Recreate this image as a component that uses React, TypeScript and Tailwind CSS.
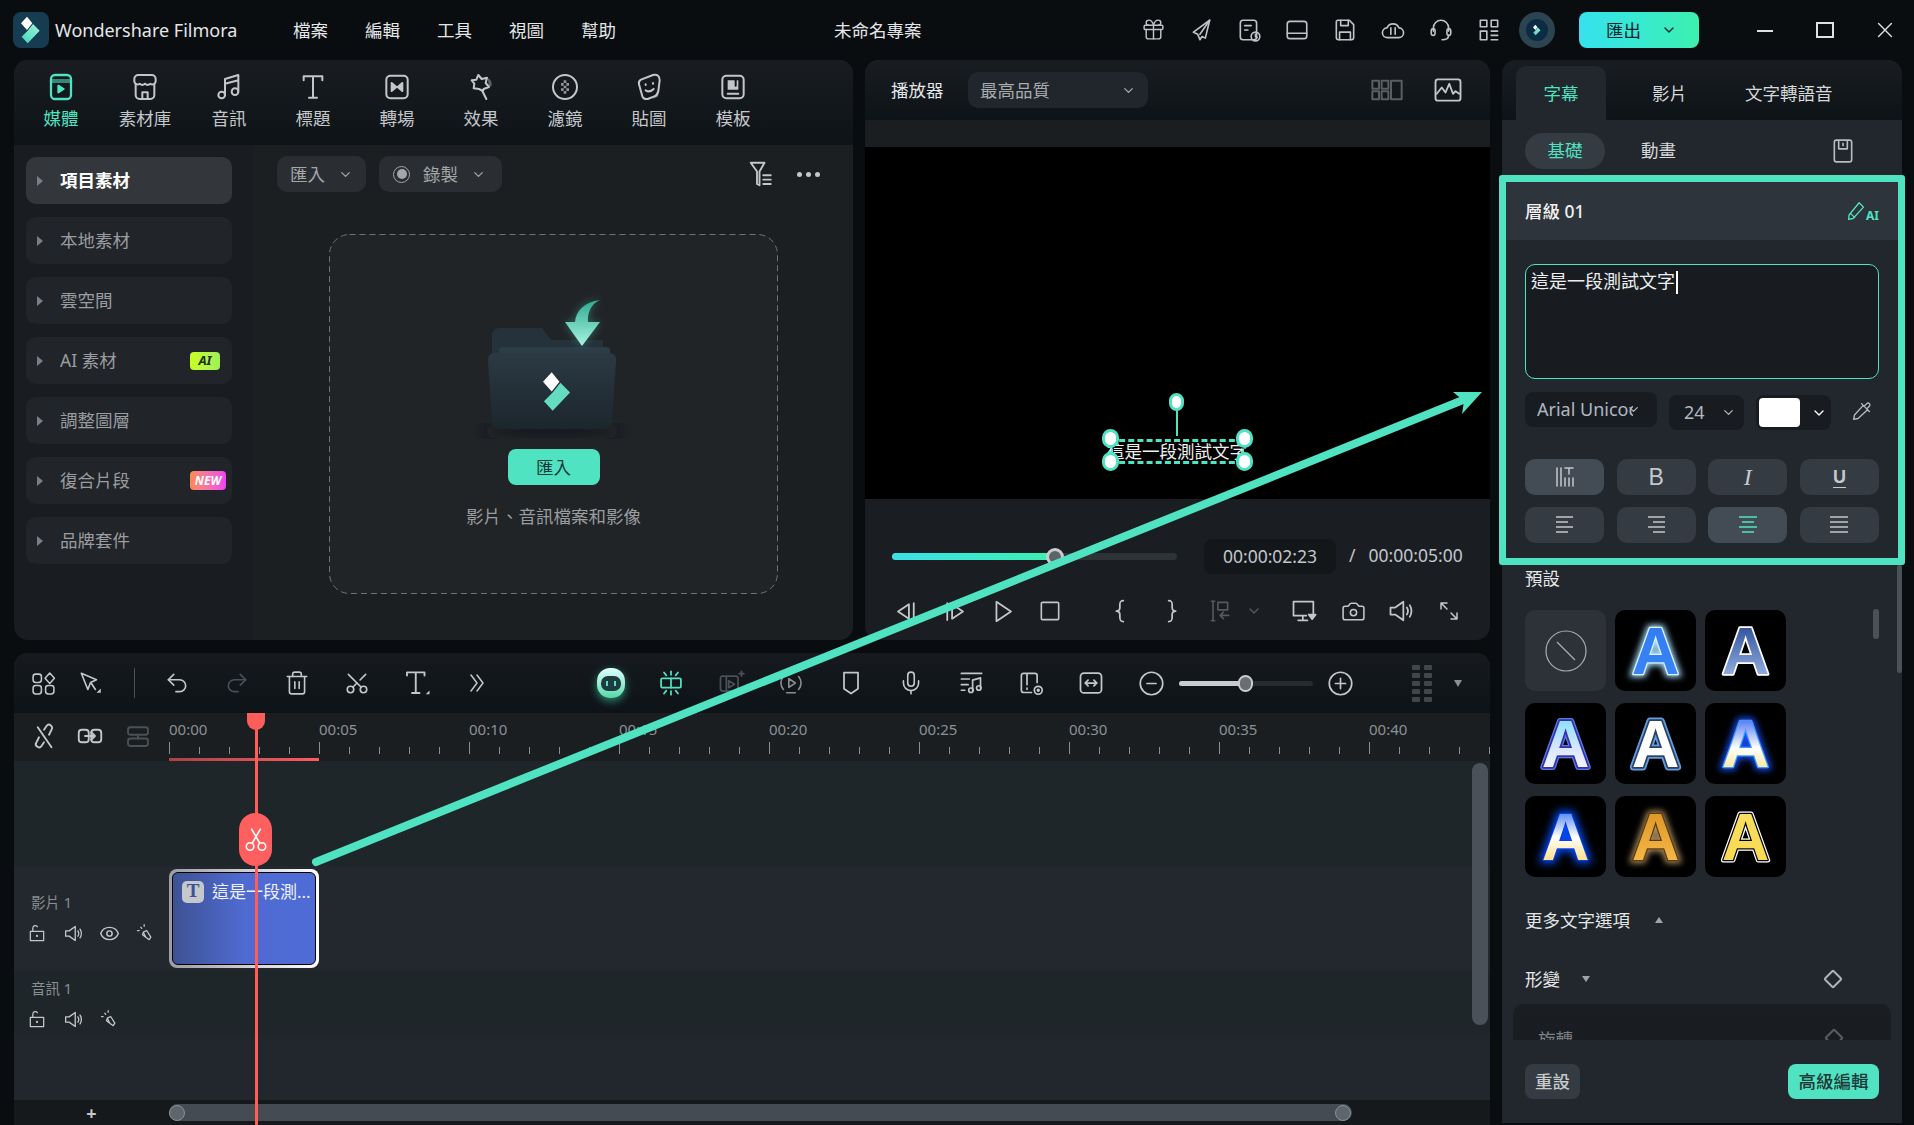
import { ReactNode } from "react";
import { Camera, ChevronDown, Eye, Gift, Mic, Redo2, Scissors, Trash2, Undo2 } from "lucide-react";

const ICON = { fill: "none", stroke: "currentColor", strokeWidth: 1.5, strokeLinecap: "round", strokeLinejoin: "round" } as const;

function Ico({ size = 26, children, className = "" }: { size?: number; children: ReactNode; className?: string }) {
  return (
    <svg width={size} height={size} viewBox="0 0 24 24" className={className} {...ICON}>
      {children}
    </svg>
  );
}

function Mark({ w, h }: { w: number; h: number }) {
  return (
    <svg width={w} height={h} viewBox="0 0 30 40">
      <defs>
        <linearGradient id={`mark${w}`} x1="0" y1="1" x2="1" y2="0">
          <stop offset="0" stopColor="#3fd6b2" />
          <stop offset="1" stopColor="#a5f2de" />
        </linearGradient>
      </defs>
      <polygon points="9,0 17,10 9,20 0,10" fill="#fff" />
      <polygon points="18,11 28,21 10,40 1,30 10,21" fill={`url(#mark${w})`} />
    </svg>
  );
}

function Tri({ className = "" }: { className?: string }) {
  return <span className={`inline-block h-0 w-0 border-y-[5px] border-l-[6px] border-y-transparent border-l-[#7a7f85] ${className}`} />;
}

function TopBar() {
  const right = [
    <Gift key="g" size={25} strokeWidth={1.4} />,
    <Ico key="s"><path d="M20 3 5 14l4 2 2 5 2-3 3 1.500z" /><path d="m20 3-9 13" /></Ico>,
    <Ico key="h"><rect x="4" y="3" width="15" height="18" rx="2.500" /><path d="M8 8h6M8 12h3" /><circle cx="18" cy="18" r="4" /><path d="M18 16v2l1.500 1" /></Ico>,
    <Ico key="l"><rect x="3" y="4" width="18" height="16" rx="2.500" /><path d="M3 15h18" /></Ico>,
    <Ico key="v"><path d="M5 3h11l4 4v12a2 2 0 0 1-2 2H6a2 2 0 0 1-2-2V4z" /><path d="M8 3v5h7V3M7 21v-7h10v7" /></Ico>,
    <Ico key="c"><path d="M7 19a4.500 4.500 0 0 1-.5-9 6 6 0 0 1 11 0 4.500 4.500 0 0 1-.5 9z" /><path d="M10 10v6M14 10v6" /></Ico>,
    <Ico key="p"><path d="M5 13V10a7 7 0 0 1 14 0v3" /><rect x="3" y="11" width="3.500" height="6" rx="1.500" /><rect x="17.500" y="11" width="3.500" height="6" rx="1.500" /><path d="M19 17c0 3-3 4-6 4" /></Ico>,
    <Ico key="a"><path d="M4 3h6v6H4zM14 3h6v6h-6zM4 13h6v8H4zM14 13h6M14 17h6M14 21h6" /></Ico>,
  ];
  return (
    <div className="flex h-[60px] items-center text-[#e4e6e8]">
      <div className="ml-[13px] flex h-[36px] w-[36px] items-center justify-center rounded-[8px] bg-[#163c52]">
        <Mark w={20} h={28} />
      </div>
      <span className="ml-[6px] w-[200px] text-[18px]">Wondershare Filmora</span>
      <div className="ml-[38px] flex gap-[36px] text-[17.500px]">
        {["檔案", "編輯", "工具", "視圖", "幫助"].map((m) => (
          <span key={m} className="w-[36px]">{m}</span>
        ))}
      </div>
      <span className="ml-[217px] w-[90px] text-[17.500px]">未命名專案</span>
      <div className="ml-[205px] flex text-[#bfc3c7]">
        {right.map((icon, i) => (
          <span key={i} className="flex w-[48px] justify-center">{icon}</span>
        ))}
      </div>
      <div className="ml-[6px] flex h-[36px] w-[36px] items-center justify-center rounded-full bg-[#2b4450]">
        <span className="flex h-[22px] w-[22px] items-center justify-center rounded-full bg-[#0b2c44]">
          <Mark w={8} h={12} />
        </span>
      </div>
      <div className="ml-[24px] flex h-[36px] w-[120px] items-center rounded-[8px] bg-gradient-to-r from-[#36e2ee] to-[#3df0ae] pl-[27px] text-[17.500px] text-[#13262b]">
        匯出
        <ChevronDown size={16} className="ml-[20px]" />
      </div>
      <div className="ml-[36px] flex items-center text-[#e0e0e0]">
        <span className="flex w-[60px] justify-center"><span className="mt-[1px] h-[2px] w-[16px] bg-[#e0e0e0]" /></span>
        <span className="flex w-[60px] justify-center"><span className="h-[16px] w-[18px] border-2 border-[#e0e0e0]" /></span>
        <Ico size={22} className="ml-[19px]"><path d="m5 5 14 14M19 5 5 19" /></Ico>
      </div>
    </div>
  );
}

function MediaTab({ label, active, children }: { label: string; active?: boolean; children: ReactNode }) {
  return (
    <div className={`flex w-[84px] flex-col items-center ${active ? "text-[#50e3c2]" : "text-[#c4c7ca]"}`}>
      <span className="flex h-[32px] items-center">{children}</span>
      <span className="mt-[3px] text-[17.500px] leading-[24px]">{label}</span>
    </div>
  );
}

function SideItem({ label, active, badge }: { label: string; active?: boolean; badge?: ReactNode }) {
  return (
    <div className={`relative flex h-[47px] items-center rounded-[10px] pl-[11px] ${active ? "bg-[#33373b] font-bold text-white" : "bg-[#212428] text-[#9a9da0]"}`}>
      <Tri />
      <span className="ml-[17px] text-[17.500px]">{label}</span>
      {badge}
    </div>
  );
}

function SelectBox({ children, className = "" }: { children: ReactNode; className?: string }) {
  return <div className={`flex h-[36px] items-center rounded-[10px] bg-[#2a2e32] text-[17.500px] text-[#a4a6a8] ${className}`}>{children}</div>;
}

function FolderArt() {
  return (
    <svg width="160" height="150" viewBox="0 0 160 150">
      <defs>
        <linearGradient id="folderBody" x1="0" y1="0" x2="0" y2="1">
          <stop offset="0" stopColor="#2b3a44" />
          <stop offset="1" stopColor="#1c262d" />
        </linearGradient>
        <linearGradient id="arrowFill" x1="0" y1="0" x2="0" y2="1">
          <stop offset="0" stopColor="#2fa98f" />
          <stop offset="1" stopColor="#a6f5e1" />
        </linearGradient>
        <filter id="soft"><feGaussianBlur stdDeviation="7" /></filter>
        <filter id="glowA" x="-40%" y="-40%" width="180%" height="180%"><feGaussianBlur stdDeviation="4" /></filter>
      </defs>
      <ellipse cx="78" cy="140" rx="72" ry="6" fill="#14191d" filter="url(#soft)" />
      <path d="M18 45q0-8 8-8h42l9 12h52v30H18z" fill="#25323b" />
      <rect x="25" y="56" width="111" height="14" rx="4" fill="#2d3d47" />
      <path d="M126 9C110 11 102 20 101 31H91l17 24 18-24h-12c-1-9 3-18 12-22z" fill="#50e3c2" opacity=".35" filter="url(#glowA)" />
      <path d="M126 9C110 11 102 20 101 31H91l17 24 18-24h-12c-1-9 3-18 12-22z" fill="url(#arrowFill)" />
      <path d="M14 69q0-7 7-7h114q7 0 7 7l-4 62q-1 7-8 7H26q-7 0-8-7z" fill="url(#folderBody)" />
      <svg x="69" y="81" width="29" height="39" viewBox="0 0 30 40" overflow="visible">
        <polygon points="9,0 17,10 9,20 0,10" fill="#fff" />
        <polygon points="18,11 28,21 10,40 1,30 10,21" fill="#64dcc0" />
      </svg>
    </svg>
  );
}

function MediaPanel() {
  return (
    <div className="flex w-[839px] flex-col overflow-hidden rounded-[14px] bg-[#191c20]">
      <div className="flex h-[85px] bg-gradient-to-b from-[#191d21] to-[#0e1318] pl-[5px] pt-[11px]">
        <MediaTab label="媒體" active>
          <Ico size={32}><rect x="4.500" y="3" width="15" height="18" rx="3" strokeWidth="1.700" /><path d="M5 7.500h14" strokeWidth="3" opacity=".55" /><path d="m10 11 4 2.500-4 2.500z" fill="currentColor" /></Ico>
        </MediaTab>
        <MediaTab label="素材庫">
          <Ico size={32}><path d="M7 3h10a3 3 0 0 1 3 3v2a2.500 2.500 0 0 1-4 1.500 3 3 0 0 1-4 0 3 3 0 0 1-4 0A2.500 2.500 0 0 1 4 8V6a3 3 0 0 1 3-3z" /><path d="M5 10v8a3 3 0 0 0 3 3h8a3 3 0 0 0 3-3v-8M10 21v-5h4v5" /></Ico>
        </MediaTab>
        <MediaTab label="音訊">
          <Ico size={32}><path d="M9 18V6l10-3v12M9 9.500 19 7" /><circle cx="6.500" cy="18" r="2.500" /><circle cx="16.500" cy="15.500" r="2.500" /></Ico>
        </MediaTab>
        <MediaTab label="標題">
          <Ico size={32}><path d="M5 7V4h14v3M12 4v16M9 20h6" /></Ico>
        </MediaTab>
        <MediaTab label="轉場">
          <Ico size={32}><rect x="4" y="3.500" width="16" height="17" rx="3" /><path d="m8 9 3.500 3L8 15zM16 9l-3.500 3 3.500 3z" fill="currentColor" /></Ico>
        </MediaTab>
        <MediaTab label="效果">
          <Ico size={32}><path d="m10 3 2.500 3 4-1-1 4 2.500 3-4 1.500-.5 1.500-3-1.500-4-.5.5-3.500L5 7l3.500-.5z" /><path d="m13 15 3 6" /><path d="M17 5a6 6 0 0 1 3 6l-2 1z" fill="currentColor" opacity=".4" stroke="none" /></Ico>
        </MediaTab>
        <MediaTab label="濾鏡">
          <Ico size={32}><circle cx="12" cy="12" r="9" /><path d="M9 9h2v2H9zM13 9h2v2h-2zM11 11h2v2h-2zM9 13h2v2H9zM13 13h2v2h-2zM11 7h2v2h-2zM11 15h2v2h-2z" fill="currentColor" stroke="none" opacity=".7" /></Ico>
        </MediaTab>
        <MediaTab label="貼圖">
          <Ico size={32}><path d="M6 6.500 15 3q5-1 5 4l-1 8q-.5 3-3 4l-5 2q-3 .5-4-2L4.500 10Q4 7.500 6 6.500z" /><path d="M9.500 10v.5M15 9v.5M9.500 14.500q3 2 6-1" /><path d="m19 14-4 7 4-2z" fill="currentColor" opacity=".5" stroke="none" /></Ico>
        </MediaTab>
        <MediaTab label="模板">
          <Ico size={32}><rect x="4" y="3.500" width="16" height="17" rx="3" /><path d="M8 7h8v7H8z" fill="currentColor" stroke="none" /><path d="M8 17h8" /><path d="M14 7v4" stroke="#101418" /></Ico>
        </MediaTab>
      </div>
      <div className="flex flex-1">
        <div className="flex w-[239px] flex-col gap-[13px] pl-[12px] pr-[21px] pt-[12px]">
          <SideItem label="項目素材" active />
          <SideItem label="本地素材" />
          <SideItem label="雲空間" />
          <SideItem
            label="AI 素材"
            badge={<span className="absolute left-[164px] flex h-[18px] w-[30px] items-center justify-center rounded-[4px] bg-gradient-to-r from-[#c8ff1e] to-[#9ef058] text-[13px] font-bold italic text-[#22301a]">AI</span>}
          />
          <SideItem label="調整圖層" />
          <SideItem
            label="復合片段"
            badge={<span className="absolute left-[164px] flex h-[19px] w-[36px] items-center justify-center rounded-[4px] bg-gradient-to-r from-[#ff8a50] to-[#f040f0] text-[12px] font-bold italic text-white">NEW</span>}
          />
          <SideItem label="品牌套件" />
        </div>
        <div className="flex flex-1 flex-col bg-[#1c1f22]">
          <div className="flex items-center pl-[24px] pt-[11px]">
            <SelectBox className="w-[89px] justify-between px-[13px]">匯入<ChevronDown size={15} /></SelectBox>
            <SelectBox className="ml-[13px] w-[123px] px-[14px]">
              <span className="flex h-[17px] w-[17px] items-center justify-center rounded-full border border-[#a4a6a8]"><span className="h-[10px] w-[10px] rounded-full bg-[#a4a6a8]" /></span>
              <span className="ml-[13px]">錄製</span>
              <ChevronDown size={15} className="ml-[13px]" />
            </SelectBox>
            <Ico size={30} className="ml-[245px] text-[#c4c7ca]"><path d="M3 3h11l-4 7v11l-2-1v-10zM13 13h6M13 16.500h6M13 20h6" /></Ico>
            <span className="ml-[20px] flex gap-[4px]">
              <span className="h-[5px] w-[5px] rounded-full bg-[#c4c7ca]" />
              <span className="h-[5px] w-[5px] rounded-full bg-[#c4c7ca]" />
              <span className="h-[5px] w-[5px] rounded-full bg-[#c4c7ca]" />
            </span>
          </div>
          <div className="relative ml-[76px] mt-[42px] flex h-[360px] w-[449px] flex-col items-center rounded-[20px] bg-[#212427]">
            <svg className="absolute left-0 top-0" width="449" height="360" fill="none">
              <rect x=".5" y=".5" width="448" height="359" rx="20" stroke="#6e7276" strokeDasharray="6 4" />
            </svg>
            <div className="mt-[57px]"><FolderArt /></div>
            <div className="mt-[8px] flex h-[36px] w-[92px] items-center justify-center rounded-[8px] bg-[#50e3c2] text-[17.500px] text-[#1a3a38]">匯入</div>
            <span className="mt-[18px] text-[17.500px] text-[#9a9da0]">影片、音訊檔案和影像</span>
          </div>
        </div>
      </div>
    </div>
  );
}

function Handle({ className }: { className: string }) {
  return <span className={`absolute h-[19px] w-[17px] rounded-full border-[3px] border-[#50e3c2] bg-white ${className}`} />;
}

function CtlSlot({ w = 48, children, className = "" }: { w?: number; children: ReactNode; className?: string }) {
  return <span className={`flex justify-center ${className}`} style={{ width: w }}>{children}</span>;
}

function Player() {
  return (
    <div className="flex w-[625px] flex-col overflow-hidden rounded-[14px] bg-[#1a1e22]">
      <div className="flex h-[60px] items-center bg-gradient-to-b from-[#191d21] to-[#0e1318] text-[#c4c7ca]">
        <span className="ml-[26px] w-[54px] text-[17.500px] text-[#e4e6e8]">播放器</span>
        <div className="ml-[23px] flex h-[36px] w-[180px] items-center rounded-[10px] bg-[#20262b] pl-[12px] text-[17.500px] text-[#a8abae]">
          最高品質
          <ChevronDown size={15} className="ml-[71px]" />
        </div>
        <Ico size={32} className="ml-[223px] text-[#5a5e62]"><path d="M1 5h5v6H1zM1 13h5v6H1zM8 5h5v6H8zM8 13h5v6H8zM15 5h8v14h-8z" /></Ico>
        <Ico size={30} className="ml-[30px]"><rect x="2" y="3.500" width="20" height="17" rx="2" /><path d="m3 15 4-5 3 4 3-7 3 8 2-2 3 2" /></Ico>
      </div>
      <div className="h-[27px] bg-[#1b1e21]" />
      <div className="relative h-[352px] bg-black">
        <span className="absolute left-[304px] top-[246px] h-[18px] w-[15px] rounded-full border-[3px] border-[#50e3c2] bg-white" />
        <span className="absolute left-[311px] top-[262px] h-[27px] w-[2px] bg-[#50e3c2]" />
        <div className="absolute left-[245px] top-[292px] flex h-[25px] w-[134px] items-center justify-center border-[3px] border-dashed border-[#50e3c2] text-[17.500px] whitespace-nowrap text-[#f0f0f0]">
          這是一段測試文字
        </div>
        <Handle className="left-[237px] top-[282px]" />
        <Handle className="left-[237px] top-[305px]" />
        <Handle className="left-[371px] top-[282px]" />
        <Handle className="left-[371px] top-[305px]" />
      </div>
      <div className="flex h-[75px] items-end">
        <div className="mb-[14px] ml-[27px] flex h-[7px] w-[285px] items-center rounded-full bg-[#2e3338]">
          <span className="h-[7px] w-[163px] rounded-full bg-gradient-to-r from-[#3ce0e6] to-[#3cf0b0]" />
          <span className="-ml-[9px] h-[18px] w-[18px] rounded-full border-[3px] border-[#c8cccf] bg-[#5e6368]" />
        </div>
        <div className="ml-[27px] flex h-[35px] w-[132px] items-center justify-center rounded-[8px] bg-[#14171a] text-[17.500px] text-[#c0c6cc]">00:00:02:23</div>
        <span className="mb-[6px] ml-[13px] text-[17.500px] text-[#c0c6cc]">/</span>
        <span className="mb-[6px] ml-[13px] text-[17.500px] text-[#c0c6cc]">00:00:05:00</span>
      </div>
      <div className="flex flex-1 items-center pl-[17px] pt-[8px] text-[#c4c7ca]">
        <CtlSlot><Ico size={29}><path d="M14 6 5 12l9 6zM18 5v14" /></Ico></CtlSlot>
        <CtlSlot><Ico size={29}><path d="m10 6 9 6-9 6zM6 5v14" /></Ico></CtlSlot>
        <CtlSlot><Ico size={29}><path d="m7 4 12 8-12 8z" /></Ico></CtlSlot>
        <CtlSlot><Ico><rect x="4" y="4" width="16" height="16" rx="1" /></Ico></CtlSlot>
        <CtlSlot className="ml-[23px]"><Ico size={28}><path d="M14 3c-3 0-3 2-3 4v2c0 2-1 3-3 3 2 0 3 1 3 3v2c0 2 0 4 3 4" /></Ico></CtlSlot>
        <CtlSlot w={52}><Ico size={28}><path d="M10 3c3 0 3 2 3 4v2c0 2 1 3 3 3-2 0-3 1-3 3v2c0 2 0 4-3 4" /></Ico></CtlSlot>
        <CtlSlot w={44} className="text-[#565a5e]"><Ico><path d="M5 3h3M5 21h3M6.500 3v18M11 4h9v7h-9zM21 16h-8m3-3-3 3 3 3" /></Ico></CtlSlot>
        <CtlSlot w={26} className="text-[#565a5e]"><ChevronDown size={16} /></CtlSlot>
        <CtlSlot w={68} className="ml-[3px]"><Ico size={28}><path d="M20 14V4H3v12h11M11 16v4M7 20h8" /><path d="m16 15 6 0-3 4z" fill="currentColor" /></Ico></CtlSlot>
        <CtlSlot w={30}><Camera size={25} strokeWidth={1.5} /></CtlSlot>
        <CtlSlot w={66}><Ico size={28}><path d="M3 9h4l7-5v16l-7-5H3z" /><path d="M17 9q2 3 0 6M19.500 7q3 5 0 10" /></Ico></CtlSlot>
        <CtlSlot w={30}><Ico size={24}><path d="M4 4h6M4 4v6M4 4l6 6M20 20h-6M20 20v-6M20 20l-6-6" /></Ico></CtlSlot>
      </div>
    </div>
  );
}

function ToolSlot({ dim, teal, children }: { dim?: boolean; teal?: boolean; children: ReactNode }) {
  return <span className={`flex w-[60px] justify-center ${dim ? "text-[#4b5056]" : teal ? "text-[#50e3c2]" : "text-[#c4c7ca]"}`}>{children}</span>;
}

function Ruler() {
  const marks = ["00:00", "00:05", "00:10", "00:15", "00:20", "00:25", "00:30", "00:35", "00:40"];
  return (
    <div className="relative flex flex-1 overflow-hidden">
      {marks.map((m) => (
        <div key={m} className="flex w-[150px] shrink-0 flex-col">
          <span className="mt-[6px] h-[20px] text-[15px] leading-[20px] text-[#8a9098]">{m}</span>
          <div className="mt-[3px] flex items-end">
            <span className="h-[12px] w-[1px] bg-[#8a8e92]" />
            {[0, 1, 2, 3].map((t) => (
              <span key={t} className="ml-[29px] h-[7px] w-[1px] bg-[#8a8e92]" />
            ))}
          </div>
        </div>
      ))}
      <span className="absolute bottom-0 left-0 h-[3px] w-[150px] bg-gradient-to-r from-[#a84246] to-[#ff5c5c]" />
    </div>
  );
}

function TrackHead({ name, children }: { name: string; children: ReactNode }) {
  return (
    <div className="w-[155px] pl-[17px]">
      <div className="text-[14.500px] leading-[20px] text-[#8a8e92]">{name}</div>
      <div className="mt-[11px] -ml-[12px] flex text-[#c4c7ca]">{children}</div>
    </div>
  );
}

const Lock = () => (
  <span className="flex w-[36px] justify-center"><Ico size={20}><path d="M4 10h16v11H4zM7 10V6a3 3 0 0 1 5.500-1.500" /><circle cx="12" cy="15.500" r=".6" fill="currentColor" /></Ico></span>
);
const Speaker = () => (
  <span className="flex w-[36px] justify-center"><Ico size={21}><path d="M3 9h4l7-5v16l-7-5H3z" /><path d="M17 9q2 3 0 6M19.500 7q3 5 0 10" /></Ico></span>
);
const Solo = () => (
  <span className="flex w-[36px] justify-center"><Ico size={20}><path d="m10 11 4-2 5 8-2 3-4-3zM10 11l-1 3 4 3M7 5l1 1.500M3 9h2M11 2l0 2" /></Ico></span>
);

function Timeline() {
  return (
    <div className="relative flex flex-1 flex-col overflow-hidden rounded-t-[14px] bg-[#21272d]">
      <div className="flex h-[60px] shrink-0 items-center bg-gradient-to-b from-[#161a1e] to-[#0e1318] pl-[15px] text-[#c4c7ca]">
        <span className="flex w-[28px] justify-center">
          <Ico size={25}><rect x="2" y="3" width="8" height="8" rx="2.500" /><path d="m18 2 4.500 5-4.500 5-4.500-5z" /><rect x="2" y="14" width="8" height="8" rx="2.500" /><rect x="14" y="14" width="8" height="8" rx="2.500" /></Ico>
        </span>
        <span className="flex w-[66px] justify-center">
          <Ico size={26}><path d="m4 3 14 6-5.500 2.500L10 18z" /><path d="m13 12 4 6" /><path d="m18 21 4-4v4z" fill="currentColor" stroke="none" /></Ico>
        </span>
        <span className="ml-[11px] mr-[12px] h-[30px] w-[1px] bg-[#4a4f54]" />
        <ToolSlot><Undo2 size={26} strokeWidth={1.5} /></ToolSlot>
        <ToolSlot dim><Redo2 size={26} strokeWidth={1.5} /></ToolSlot>
        <ToolSlot><Trash2 size={26} strokeWidth={1.5} /></ToolSlot>
        <ToolSlot><Scissors size={26} strokeWidth={1.5} className="-rotate-90" /></ToolSlot>
        <ToolSlot><Ico size={30}><path d="M4 6V3.500h14V6M11 3.500V20M8 20h6" /><path d="m19 21 3-3v3z" fill="currentColor" stroke="none" /></Ico></ToolSlot>
        <ToolSlot><Ico size={24}><path d="m6 4 6 8-6 8M12 4l6 8-6 8" /></Ico></ToolSlot>
        <span className="w-[74px]" />
        <ToolSlot>
          <span className="flex h-[30px] w-[28px] items-center justify-center rounded-[13px] bg-gradient-to-b from-[#dff] to-[#50d8a8] shadow-[0_3px_8px_#2a8a70]">
            <span className="flex h-[15px] w-[20px] items-center justify-center gap-[6px] rounded-[7px] bg-[#1c3c40]">
              <span className="h-[5px] w-[2px] bg-[#50e3c2]" />
              <span className="h-[5px] w-[2px] bg-[#50e3c2]" />
            </span>
          </span>
        </ToolSlot>
        <ToolSlot teal><Ico size={28}><rect x="3.500" y="8" width="17" height="8" rx="1" /><path d="M12 8v8M12 2v3M12 19v3M6 3l2 2.500M18 3l-2 2.500M6 21l2-2.500M18 21l-2-2.500" /></Ico></ToolSlot>
        <ToolSlot dim><Ico size={28}><path d="M5 6h11a2 2 0 0 1 2 2v11H5a2 2 0 0 1-2-2V8a2 2 0 0 1 2-2zM8 6v13" /><path d="m10 10 5 3-5 3z" /><path d="M21 2v4M19 4h4" /></Ico></ToolSlot>
        <ToolSlot dim><span className="text-[#8a8e92]"><Ico size={26}><path d="M5 6a9 9 0 0 0 0 12M19 6a9 9 0 0 1 0 12M8 21h8" /><path d="m10 8 6 4-6 4z" /></Ico></span></ToolSlot>
        <ToolSlot><Ico size={28}><path d="M6 3h12v14l-6 4-6-4z" /></Ico></ToolSlot>
        <ToolSlot><Mic size={26} strokeWidth={1.5} /></ToolSlot>
        <ToolSlot><Ico size={27}><path d="M3 3h18M3 8h7M3 13h6M3 18h3" /><path d="M13 18V9l7-2v9" /><circle cx="11.500" cy="18" r="2" /><circle cx="18.500" cy="16" r="2" /></Ico></ToolSlot>
        <ToolSlot><Ico size={27}><path d="M12 20H5a2 2 0 0 1-2-2V5a2 2 0 0 1 2-2h10a2 2 0 0 1 2 2v6M8 3v10M8 16v1" /><circle cx="18" cy="18" r="3.500" /><circle cx="18" cy="18" r=".8" fill="currentColor" /></Ico></ToolSlot>
        <ToolSlot><Ico size={28}><rect x="3" y="3.500" width="18" height="17" rx="3" /><path d="M7 12h10M9.500 9.500 7 12l2.500 2.500M14.500 9.500 17 12l-2.500 2.500" /></Ico></ToolSlot>
        <ToolSlot><Ico size={27}><circle cx="12" cy="12" r="10" /><path d="M8 12h8" /></Ico></ToolSlot>
        <div className="-ml-[2px] flex h-[5px] w-[134px] items-center rounded-full bg-[#262b30]">
          <span className="h-[5px] w-[66px] rounded-full bg-[#c8cccf]" />
          <span className="-ml-[7px] h-[17px] w-[15px] rounded-full border-2 border-[#c8cccf] bg-[#6a6e72]" />
        </div>
        <span className="ml-[12px] flex w-[30px] justify-center"><Ico size={27}><circle cx="12" cy="12" r="10" /><path d="M7.500 12h9M12 7.500v9" /></Ico></span>
        <span className="ml-[57px] grid grid-cols-2 gap-x-[4px] gap-y-[3px]">
          {Array.from({ length: 10 }).map((_, i) => (
            <span key={i} className="h-[5px] w-[8px] rounded-[1px] bg-[#41464b]" />
          ))}
        </span>
        <span className="ml-[22px] h-0 w-0 border-x-[4px] border-t-[7px] border-x-transparent border-t-[#8a8e92]" />
      </div>
      <div className="flex h-[48px] shrink-0 bg-[#1a1e20]">
        <div className="flex w-[155px] shrink-0 items-center pb-[2px] pl-[12px] text-[#c4c7ca]">
          <span className="flex w-[36px] justify-center"><Ico size={30}><path d="M8 13 6 17a2.500 2.500 0 0 0 4 3l2-3M16 11l2-4a2.500 2.500 0 0 0-4-3l-2 3M7 5l11 16" /></Ico></span>
          <span className="ml-[10px] flex w-[36px] justify-center"><Ico size={30}><rect x="3" y="7" width="8" height="10" rx="2.500" /><rect x="13" y="7" width="8" height="10" rx="2.500" /><path d="M8 12h8m-3-3 3 3-3 3" /></Ico></span>
          <span className="ml-[12px] flex w-[36px] justify-center text-[#4b5056]"><Ico size={30}><rect x="4" y="5" width="16" height="6" rx="2" /><rect x="4" y="14" width="16" height="6" rx="2" /><path d="M12 11v3" /></Ico></span>
        </div>
        <Ruler />
      </div>
      <div className="flex h-[105px] shrink-0 bg-[#1e262a]" />
      <div className="flex h-[104px] shrink-0 items-center bg-[#22282e]">
        <TrackHead name="影片 1">
          <Lock />
          <Speaker />
          <span className="flex w-[36px] justify-center"><Eye size={21} strokeWidth={1.7} /></span>
          <Solo />
        </TrackHead>
        <div className="h-[99px] w-[150px] rounded-[8px] bg-gradient-to-r from-[#9a9da4] to-white p-[3px]">
          <div className="flex h-full rounded-[6px] border border-black bg-gradient-to-r from-[#3e5294] via-[#4f6bd2] to-[#4f6bd6] pl-[9px] pt-[8px]">
            <span className="flex h-[22px] w-[22px] items-center justify-center rounded-[5px] bg-[#c4c7cc] font-['Liberation_Serif',serif] text-[19px] font-bold text-[#3e5294]">T</span>
            <span className="ml-[8px] text-[17px] leading-[22px] whitespace-nowrap text-[#eef0f8]">這是一段測...</span>
          </div>
        </div>
      </div>
      <div className="flex h-[67px] shrink-0 items-center bg-[#1e262a]">
        <TrackHead name="音訊 1">
          <Lock />
          <Speaker />
          <Solo />
        </TrackHead>
      </div>
      <div className="flex-1" />
      <div className="flex h-[25px] shrink-0 items-center bg-[#15191c]">
        <span className="w-[155px] text-center text-[18px] font-bold leading-[18px] text-[#c4c7ca]">+</span>
        <div className="flex h-[17px] w-[1183px] items-center justify-between rounded-full bg-[#454b52]">
          <span className="h-[16px] w-[16px] rounded-full border border-[#8a9096] bg-[#5e656c]" />
          <span className="mr-[1px] h-[16px] w-[16px] rounded-full border border-[#8a9096] bg-[#5e656c]" />
        </div>
      </div>
      {/* vertical scroll + playhead sit over the tracks */}
      <span className="absolute left-[1458px] top-[110px] h-[262px] w-[16px] rounded-full bg-[#4a5158]" />
      <span className="absolute left-[241px] top-[60px] h-[412px] w-[3px] bg-[#ff5c5c]" />
      <span className="absolute left-[233px] top-[60px] h-[17px] w-[18px] rounded-b-[9px] bg-[#ff5c5c]" />
      <span className="absolute left-[225px] top-[160px] flex h-[53px] w-[33px] items-center justify-center rounded-full bg-[#ff5f5f] text-white">
        <Ico size={26}><circle cx="6.500" cy="18" r="3.500" /><circle cx="17.500" cy="18" r="3.500" /><path d="M8.500 15 16 2M15.500 15 8 2" /></Ico>
      </span>
    </div>
  );
}

type Preset = { glow?: string; blur?: number; strokes: [string, number][]; fill: [string, string][] };

const PRESETS: Preset[] = [
  { glow: "#a8e0ff", blur: 3, strokes: [["#d8f0ff", 2.500]], fill: [["0", "#2f7bf0"], ["1", "#3a86f8"]] },
  { strokes: [["#fff", 3.500]], fill: [["0", "#1a3d8c"], ["1", "#a8c4f0"]] },
  { strokes: [["#4f80ea", 6], ["#3a2fa8", 3.500]], fill: [["0", "#6adcff"], ["0.600", "#dfe8ff"], ["1", "#fff"]] },
  { strokes: [["#5e9de0", 7], ["#2c3f60", 3.500]], fill: [["0", "#fff"], ["1", "#fff"]] },
  { glow: "#1e50ff", blur: 3.500, strokes: [["#3a9bff", 2.500]], fill: [["0", "#0a3cf0"], ["0.550", "#fff"], ["1", "#ffd860"]] },
  { glow: "#0050ff", blur: 4, strokes: [["#0a3cf0", 2]], fill: [["0", "#0050f0"], ["0.500", "#fff"], ["1", "#ffcf40"]] },
  { glow: "#b09060", blur: 3, strokes: [["#5a3c10", 2.500]], fill: [["0", "#d99020"], ["1", "#fac050"]] },
  { strokes: [["#fff", 5], ["#000", 2.500]], fill: [["0", "#f8e060"], ["1", "#f8d850"]] },
];

function PresetTile({ p, i }: { p: Preset; i: number }) {
  const font = { fontFamily: "'Liberation Sans', sans-serif", fontWeight: 700, fontSize: 66 };
  return (
    <svg width="81" height="81" viewBox="0 0 81 81" className="rounded-[10px] bg-black">
      <defs>
        <linearGradient id={`pf${i}`} x1="0" y1="0" x2="0" y2="1">
          {p.fill.map(([o, c]) => <stop key={o} offset={o} stopColor={c} />)}
        </linearGradient>
        <filter id={`pb${i}`} x="-30%" y="-30%" width="160%" height="160%"><feGaussianBlur stdDeviation={p.blur ?? 2} /></filter>
      </defs>
      {p.glow && (
        <text x="40.500" y="64" textAnchor="middle" style={font} fill={p.glow} stroke={p.glow} strokeWidth="6" filter={`url(#pb${i})`}>A</text>
      )}
      {p.strokes.map(([c, w]) => (
        <text key={c} x="40.500" y="64" textAnchor="middle" style={font} fill={c} stroke={c} strokeWidth={w} strokeLinejoin="round">A</text>
      ))}
      <text x="40.500" y="64" textAnchor="middle" style={font} fill={`url(#pf${i})`}>A</text>
    </svg>
  );
}

function FmtBtn({ active, children }: { active?: boolean; children: ReactNode }) {
  return (
    <span className={`flex h-[36px] w-[79px] items-center justify-center rounded-[10px] text-[#c4c8cc] ${active ? "bg-[#434c55]" : "bg-[#343b42]"}`}>
      {children}
    </span>
  );
}

function AlignLines({ lines, teal }: { lines: [number, number][]; teal?: boolean }) {
  return (
    <svg width="20" height="20" viewBox="0 0 20 20" stroke={teal ? "#50e3c2" : "#c4c8cc"} strokeWidth="1.500">
      {lines.map(([a, b], i) => <path key={i} d={`M${a} ${2 + i * 5}H${b}`} />)}
    </svg>
  );
}

function RightPanel() {
  return (
    <div className="ml-[12px] mb-[2px] flex w-[400px] flex-col">
      <div className="flex h-[60px] shrink-0 items-end rounded-t-[14px] bg-gradient-to-b from-[#191d21] to-[#0e1318] pl-[14px] text-[17.500px] text-[#d6d8da]">
        <span className="flex h-[54px] w-[90px] items-center justify-center rounded-t-[10px] bg-[#21272d] text-[#50e3c2]">字幕</span>
        <span className="flex h-[54px] w-[35px] items-center ml-[46px]">影片</span>
        <span className="ml-[58px] flex h-[54px] items-center">文字轉語音</span>
      </div>
      <div className="flex h-[55px] shrink-0 items-center bg-[#21272d] pl-[23px] pt-[6px] text-[17.500px] text-[#d6d8da]">
        <span className="flex h-[36px] w-[80px] items-center justify-center rounded-full bg-[#343b42] text-[#50e3c2]">基礎</span>
        <span className="ml-[36px]">動畫</span>
        <Ico size={26} className="ml-[154px] text-[#b8bcc0]"><path d="M6 2h12a2 2 0 0 1 2 2v16a2 2 0 0 1-2 2H6a2 2 0 0 1-2-2V4a2 2 0 0 1 2-2zM8 2v8h8V2M12 5v2" /></Ico>
      </div>
      <div className="flex min-h-0 flex-1 flex-col bg-[#21272d]">
        <div className="relative -mx-[3px] shrink-0 rounded-[3px] border-[7px] border-[#50e3c2] bg-[#21272d]">
          <div className="flex h-[58px] items-center justify-between bg-[#2e343b] pl-[19px] pr-[19px] text-[17.500px] font-medium text-[#f0f0f0]">
            層級 01
            <span className="flex items-end text-[#50e3c2]">
              <Ico size={21}><path d="m15 2 5 5L8 20l-5 1 .5-5zM6 15l4 4" /></Ico>
              <span className="-ml-[1px] text-[12px] font-bold leading-[13px]">AI</span>
            </span>
          </div>
          <div className="px-[19px] pt-[24px]">
            <div className="flex h-[115px] items-start rounded-[10px] border border-[#50e3c2] bg-[#181c20] pl-[5px] pt-[4px] text-[18px] leading-[24px] text-[#eceef0]">
              這是一段測試文字
              <span className="ml-[1px] mt-[2px] h-[23px] w-[1.500px] bg-white" />
            </div>
            <div className="mt-[13px] flex h-[38px] items-start text-[#b0b8c0]">
              <div className="flex h-[35px] w-[132px] items-center rounded-[8px] bg-[#181c20] pl-[12px] text-[18px]">
                <span className="w-[96px] overflow-hidden whitespace-nowrap">Arial Unicode MS</span>
                <ChevronDown size={15} className="-ml-[7px]" />
              </div>
              <div className="ml-[12px] mt-[3px] flex h-[35px] w-[75px] items-center rounded-[8px] bg-[#181c20] pl-[15px] text-[18px]">
                24
                <ChevronDown size={15} className="ml-[16px]" />
              </div>
              <div className="ml-[12px] mt-[3px] flex h-[35px] w-[75px] items-center rounded-[8px] bg-[#181c20] pl-[3px]">
                <span className="h-[29px] w-[41px] rounded-[4px] bg-white" />
                <ChevronDown size={16} className="ml-[11px] text-white" />
              </div>
              <Ico size={21} className="ml-[20px] mt-[9px] text-[#b8bcc0]"><path d="M14 5 4 16l-1 5 5-1 11-10M12 3l9 9M15 6l3-3a2 2 0 0 1 3 3l-3 3" /></Ico>
            </div>
            <div className="mt-[29px] flex justify-between">
              <FmtBtn active><Ico size={24}><path d="M4 3v18M8 3v18M12 3h8M16 3v6M12 13v8M16 13v8M20 13v8" /></Ico></FmtBtn>
              <FmtBtn><span className="font-['Liberation_Sans',sans-serif] text-[23px] font-medium">B</span></FmtBtn>
              <FmtBtn><span className="font-['Liberation_Serif',serif] text-[24px] italic">I</span></FmtBtn>
              <FmtBtn><span className="border-b border-[#c4c8cc] font-['Liberation_Sans',sans-serif] text-[18px] leading-[20px] font-bold">U</span></FmtBtn>
            </div>
            <div className="mt-[12px] mb-[15px] flex justify-between">
              <FmtBtn><AlignLines lines={[[1, 18], [1, 13], [1, 18], [1, 13]]} /></FmtBtn>
              <FmtBtn><AlignLines lines={[[2, 19], [7, 19], [2, 19], [7, 19]]} /></FmtBtn>
              <FmtBtn active><AlignLines teal lines={[[1, 19], [4, 16], [1, 19], [4, 16]]} /></FmtBtn>
              <FmtBtn><AlignLines lines={[[1, 19], [1, 19], [1, 19], [1, 19]]} /></FmtBtn>
            </div>
          </div>
        </div>
        <div className="relative min-h-0 flex-1 overflow-hidden pl-[23px] pt-[1px]">
          <div className="text-[17.500px] leading-[24px] text-[#e4e6e8]">預設</div>
          <div className="mt-[20px] grid w-[261px] grid-cols-3 gap-x-[9px] gap-y-[12px]">
            <span className="flex h-[81px] w-[81px] items-center justify-center rounded-[10px] bg-[#2d3238]">
              <svg width="42" height="42" viewBox="0 0 42 42" fill="none" stroke="#a8acb0" strokeWidth="1.200">
                <circle cx="21" cy="21" r="20" />
                <path d="m12 12 18 18" />
              </svg>
            </span>
            {PRESETS.map((p, i) => <PresetTile key={i} p={p} i={i} />)}
          </div>
          <div className="mt-[30px] flex items-center text-[17.500px] leading-[26px] text-[#e4e6e8]">
            更多文字選項
            <span className="ml-[25px] h-0 w-0 border-x-[4px] border-b-[6px] border-x-transparent border-b-[#a0a4a8]" />
          </div>
          <div className="mt-[33px] flex items-center text-[17.500px] leading-[26px] text-[#e4e6e8]">
            形變
            <span className="ml-[22px] h-0 w-0 border-x-[4px] border-t-[6px] border-x-transparent border-t-[#a0a4a8]" />
            <span className="ml-[236px] h-[14px] w-[14px] rotate-45 rounded-[2px] border-2 border-[#b0b4b8]" />
          </div>
          <div className="-ml-[12px] mt-[12px] flex h-[60px] w-[378px] justify-between rounded-t-[10px] bg-gradient-to-b from-[#1a1e22] to-[#181c20] pl-[25px] pr-[50px] pt-[22px] text-[17.500px] text-[#7c8084]">
            旋轉
            <span className="mt-[5px] h-[14px] w-[14px] rotate-45 rounded-[2px] border-2 border-[#5a5e62]" />
          </div>
          <span className="absolute right-[23px] top-[44px] h-[30px] w-[6px] rounded-full bg-[#4a5158]" />
          <span className="absolute right-0 top-0 h-[108px] w-[5px] rounded-full bg-[#4a5158]" />
        </div>
        <div className="flex h-[83px] shrink-0 items-start justify-between bg-[#21272d] px-[23px] pt-[24px] text-[17.500px]">
          <span className="flex h-[35px] w-[55px] items-center justify-center rounded-[8px] bg-[#343b42] font-medium text-[#c8cacc]">重設</span>
          <span className="flex h-[35px] w-[91px] items-center justify-center rounded-[8px] bg-[#50e3c2] font-medium text-[#1f3a38]">高級編輯</span>
        </div>
      </div>
    </div>
  );
}

export default function App() {
  return (
    <div className="relative flex h-[1125px] w-[1914px] flex-col overflow-hidden bg-[#0a0d10] [font-family:'Noto_Sans','Noto_Sans_CJK_TC',sans-serif]">
      <TopBar />
      <div className="flex min-h-0 flex-1 pl-[14px]">
        <div className="flex w-[1476px] flex-col gap-[13px]">
          <div className="flex h-[580px] shrink-0 gap-[12px]">
            <MediaPanel />
            <Player />
          </div>
          <Timeline />
        </div>
        <RightPanel />
      </div>
      {/* annotation arrow drawn over the app */}
      <svg className="pointer-events-none absolute left-0 top-0" width="1914" height="1125" viewBox="0 0 1914 1125">
        <path d="M316 862 1468 398" stroke="#50e3c2" strokeWidth="8" strokeLinecap="round" />
        <polygon points="1482,392 1453,392 1464,401 1462,414" fill="#50e3c2" />
      </svg>
    </div>
  );
}
